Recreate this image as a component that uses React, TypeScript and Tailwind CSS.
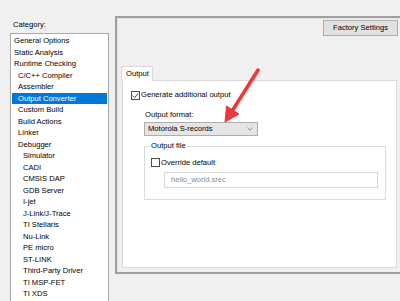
import React from "react";

const items: { label: string; level: number; selected?: boolean }[] = [
  { label: "General Options", level: 0 },
  { label: "Static Analysis", level: 0 },
  { label: "Runtime Checking", level: 0 },
  { label: "C/C++ Compiler", level: 1 },
  { label: "Assembler", level: 1 },
  { label: "Output Converter", level: 1, selected: true },
  { label: "Custom Build", level: 1 },
  { label: "Build Actions", level: 1 },
  { label: "Linker", level: 1 },
  { label: "Debugger", level: 1 },
  { label: "Simulator", level: 2 },
  { label: "CADI", level: 2 },
  { label: "CMSIS DAP", level: 2 },
  { label: "GDB Server", level: 2 },
  { label: "I-jet", level: 2 },
  { label: "J-Link/J-Trace", level: 2 },
  { label: "TI Stellaris", level: 2 },
  { label: "Nu-Link", level: 2 },
  { label: "PE micro", level: 2 },
  { label: "ST-LINK", level: 2 },
  { label: "Third-Party Driver", level: 2 },
  { label: "TI MSP-FET", level: 2 },
  { label: "TI XDS", level: 2 },
];

function Checkbox({ checked }: { checked?: boolean }) {
  return (
    <div className="w-[9px] h-[9px] border border-[#4d4d4d] bg-white flex items-center justify-center shrink-0">
      {checked && (
        <svg width="7" height="7" viewBox="0 0 7 7">
          <path d="M0.8 3.6 L2.7 5.5 L6.3 1.2" fill="none" stroke="#333" strokeWidth="0.9" />
        </svg>
      )}
    </div>
  );
}

export default function App() {
  return (
    <div className="relative w-[400px] h-[301px] bg-[#f0f0f0] flex overflow-hidden font-['Liberation_Sans',Arial,sans-serif] text-[7.6px] text-black">
      {/* Left column */}
      <div className="w-[115px] shrink-0 pl-[10px] pt-[18px]">
        <div className="h-[13px] leading-[13px] pl-[3px]">Category:</div>
        <div className="mt-[2px] w-[99px] h-[300px] border border-[#a9a9a9] bg-white pt-[1.25px] px-[1px]">
          {items.map((it) => (
            <div
              key={it.label}
              className={
                "h-[11.5px] leading-[11.5px] whitespace-nowrap " +
                (it.selected ? "bg-[#0078d7] text-white " : "") +
                (it.level === 0 ? "pl-[2px]" : it.level === 1 ? "pl-[6px]" : "pl-[11px]")
              }
            >
              {it.label}
            </div>
          ))}
        </div>
      </div>

      {/* Right frame */}
      <div className="mt-[16px] w-[285px] h-[258px] border-l-2 border-t-2 border-b-2 border-[#a0a0a0] shadow-[inset_1px_1px_0_#e3e3e3] flex flex-col shrink-0">
        <div className="flex justify-end pt-[2px] pr-[2px]">
          <div className="w-[75px] h-[16px] bg-[#e1e1e1] border border-[#adadad] flex items-center justify-center">
            Factory Settings
          </div>
        </div>
        <div className="mt-[30px] ml-[4px]">
          <div className="relative z-10 w-[32px] h-[15px] -mb-[1px] bg-white border border-b-0 border-[#d9d9d9] flex items-center pl-[4px]">
            Output
          </div>
        </div>
        <div className="ml-[5px] w-[275px] h-[188px] bg-white border border-[#d9d9d9] pl-[8px] pt-[9px] flex flex-col">
          <div className="h-[10px] flex items-center gap-[1px]">
            <Checkbox checked />
            <span>Generate additional output</span>
          </div>
          <div className="mt-[10px] ml-[14px] h-[10px] leading-[10px]">Output format:</div>
          <div className="mt-[2px] ml-[13px] w-[114px] h-[14px] bg-[#e5e5e5] border border-[#adadad] flex items-center justify-between pl-[3px] pr-[4px]">
            <span>Motorola S-records</span>
            <svg width="6" height="4" viewBox="0 0 6 4">
              <path d="M0.5 0.8 L3 3.2 L5.5 0.8" fill="none" stroke="#7a7a7a" strokeWidth="0.9" />
            </svg>
          </div>
          <div className="relative mt-[10px] ml-[13px] w-[242px] h-[54px] border border-[#dcdcdc] pl-[6px] pt-[11px]">
            <div className="absolute left-[5px] -top-[6px] bg-white px-[1px] h-[10px] leading-[10px]">
              Output file
            </div>
            <div className="h-[9px] flex items-center gap-[1px]">
              <Checkbox />
              <span>Override default</span>
            </div>
            <div className="mt-[5px] ml-[13px] w-[214px] h-[16px] border border-[#d7d7d7] flex items-center pl-[6px] text-[#8a8a8a]">
              hello_world.srec
            </div>
          </div>
        </div>
      </div>

      {/* Red arrow annotation */}
      <svg className="absolute left-0 top-0 pointer-events-none" width="400" height="301" viewBox="0 0 400 301">
        <line x1="259" y1="71" x2="233" y2="112" stroke="#000" strokeOpacity="0.12" strokeWidth="4" strokeLinecap="round" />
        <line x1="258" y1="70" x2="232" y2="111" stroke="#e8393b" strokeWidth="3.4" strokeLinecap="round" />
        <polygon points="225,122 239,114 226.5,106" fill="#e8393b" stroke="#e8393b" strokeWidth="1" strokeLinejoin="round" />
      </svg>
    </div>
  );
}
